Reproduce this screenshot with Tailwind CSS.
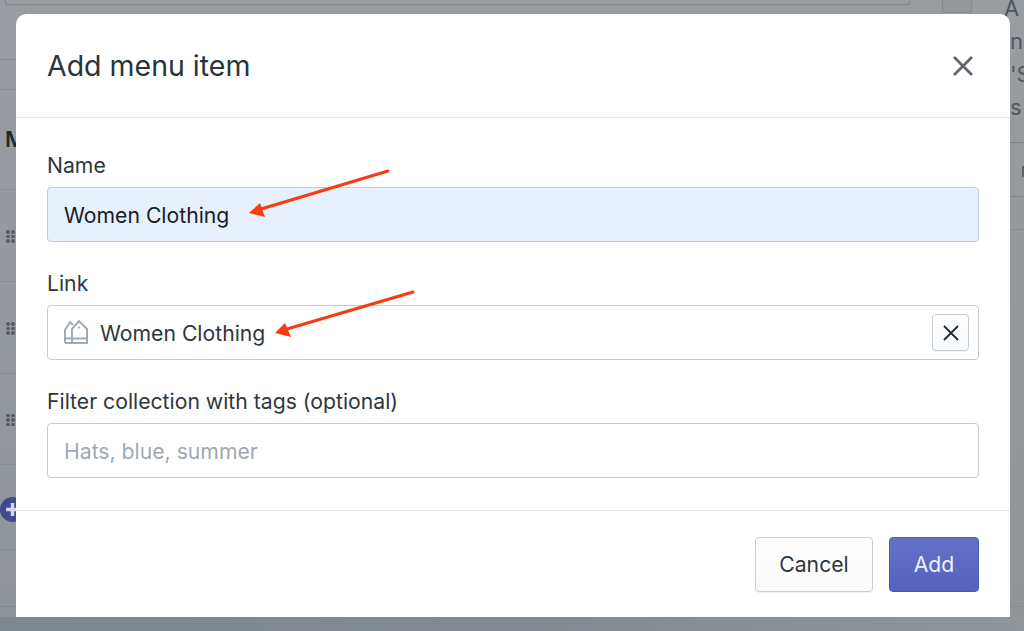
<!DOCTYPE html>
<html><head><meta charset="utf-8">
<script src="https://cdn.jsdelivr.net/npm/@tailwindcss/browser@4"></script>
</head>
<body class="relative h-[631px] w-[1024px] overflow-hidden bg-gradient-to-b from-[#999da2] to-[#8f9499] font-['Inter','Liberation_Sans',sans-serif]">
<!-- page behind the overlay -->
<div class="absolute inset-0 flex flex-col">
  <div class="flex h-[617px] shrink-0">
    <div class="w-[942px] flex flex-col shrink-0">
      <div class="h-[5px] ml-[5px] w-[905px] shrink-0 border-b border-x border-[#80868c] rounded-b-[3px] bg-[#9b9fa3]"></div>
      <div class="h-[55px] shrink-0 border-b border-[#868c92]"></div>
      <div class="h-[30px] shrink-0 border-b border-[#868c92]"></div>
      <div class="h-[100px] shrink-0 border-b border-[#868c92] text-[22px] font-semibold text-[#23272b] pt-[33px] pl-[5px] leading-[32px]">M</div>
      <div class="h-[92px] shrink-0 border-b border-[#868c92] flex items-center pl-[6px] pt-[2px]"><div class="grid grid-cols-2 gap-x-[1.500px] gap-y-[1px] w-[9px]"><i class="size-[3.500px] rounded-full bg-[#565c62]"></i><i class="size-[3.500px] rounded-full bg-[#565c62]"></i><i class="size-[3.500px] rounded-full bg-[#565c62]"></i><i class="size-[3.500px] rounded-full bg-[#565c62]"></i><i class="size-[3.500px] rounded-full bg-[#565c62]"></i><i class="size-[3.500px] rounded-full bg-[#565c62]"></i></div></div>
      <div class="h-[92px] shrink-0 border-b border-[#868c92] flex items-center pl-[6px] pt-[2px]"><div class="grid grid-cols-2 gap-x-[1.500px] gap-y-[1px] w-[9px]"><i class="size-[3.500px] rounded-full bg-[#565c62]"></i><i class="size-[3.500px] rounded-full bg-[#565c62]"></i><i class="size-[3.500px] rounded-full bg-[#565c62]"></i><i class="size-[3.500px] rounded-full bg-[#565c62]"></i><i class="size-[3.500px] rounded-full bg-[#565c62]"></i><i class="size-[3.500px] rounded-full bg-[#565c62]"></i></div></div>
      <div class="h-[91px] shrink-0 border-b border-[#868c92] flex items-center pl-[6px] pt-[2px]"><div class="grid grid-cols-2 gap-x-[1.500px] gap-y-[1px] w-[9px]"><i class="size-[3.500px] rounded-full bg-[#565c62]"></i><i class="size-[3.500px] rounded-full bg-[#565c62]"></i><i class="size-[3.500px] rounded-full bg-[#565c62]"></i><i class="size-[3.500px] rounded-full bg-[#565c62]"></i><i class="size-[3.500px] rounded-full bg-[#565c62]"></i><i class="size-[3.500px] rounded-full bg-[#565c62]"></i></div></div>
      <div class="h-[85px] shrink-0 border-b border-[#868c92] flex items-center">
        <svg class="size-[25px] mt-[4px]" viewBox="0 0 25 25"><circle cx="12.500" cy="12.500" r="12.500" fill="#3f4a8f"/><path d="M12.500 6v13M6 12.500h13" stroke="#d5d8e6" stroke-width="3.500"/></svg>
      </div>
      <div class="h-[57px] shrink-0 border-b border-[#80878d]"></div>
    </div>
    <div class="w-[30px] shrink-0">
      <div class="h-[13px] border-x border-b border-[#868c92] rounded-b-[3px] bg-[#94989d]"></div>
    </div>
    <div class="flex-1 flex flex-col overflow-hidden">
      <div class="h-[143px] shrink-0 border-b border-[#7d8389] text-[22px] leading-[33px] text-[#50575e] whitespace-nowrap">
        <div class="pl-[32px] -mt-[8px]">A</div>
        <div class="pl-[38px]">n</div>
        <div class="pl-[38px]">'S</div>
        <div class="pl-[38px] tracking-[1px]">si</div>
      </div>
      <div class="h-[54px] shrink-0 border-b border-[#7d8389] pt-[23px] pl-[50px]"><div class="h-[11px] w-[4px] bg-[#5d6368]"></div></div>
      <div class="h-[33px] shrink-0 border-b border-[#868c92]"></div>
      <div class="h-[377px] shrink-0 border-b border-[#868c92]"></div>
    </div>
  </div>
  <div class="flex-1 bg-gradient-to-r from-[#7e878e] via-[#838a91] to-[#90959a]"></div>
</div>
<!-- modal -->
<div class="absolute left-[16px] top-[14px] w-[994px] h-[603px] bg-white rounded-t-[10px] flex flex-col text-[#212b36]">
  <div class="h-[104px] shrink-0 border-b border-[#e4e6ea] pl-[31px] pr-[37px] flex items-center justify-between">
    <h1 class="text-[28.500px] leading-[36px] text-[#2b333b]">Add menu item</h1>
    <svg class="size-[20px]" viewBox="0 0 20 20" fill="none" stroke="#5f666d" stroke-width="2.800"><path d="M1 1 19 19M19 1 1 19"/></svg>
  </div>
  <div class="h-[393px] shrink-0 border-b border-[#e4e6ea] px-[31px] pt-[33px]">
    <label class="block text-[21.200px] leading-[28px] text-[#2f373e]">Name</label>
    <div class="mt-[8px] h-[55px] rounded-[4px] border border-[#c4cdd5] bg-[#e8effd] flex items-center pl-[16px] pt-[2px] text-[21.200px] text-[#16202a]">Women Clothing</div>
    <label class="block mt-[27px] text-[21.200px] leading-[28px] text-[#2f373e]">Link</label>
    <div class="mt-[8px] h-[55px] rounded-[4px] border border-[#c4cdd5] bg-white flex items-center pl-[16px] pr-[9px] text-[21.200px]">
      <svg class="size-[24px] mr-[12px] -mt-[2px]" viewBox="0 0 24 24" fill="none" stroke="#9fabb8" stroke-width="2"><path d="M1 23V10L6 2l3 3"/><path d="M8 23V9l7-8 8 8v14H1"/><path d="M1 18.500h22"/><circle cx="15" cy="7.500" r="1.100" fill="#9fabb8" stroke="none"/></svg>
      <span class="text-[#2f373e] pt-[2px]">Women Clothing</span>
      <div class="ml-auto size-[37px] rounded-[4px] border border-[#c4cdd5] flex items-center justify-center bg-gradient-to-b from-white to-[#f9fafb] shadow-[0_1px_0_rgba(22,29,37,0.05)]">
        <svg class="size-[16px]" viewBox="0 0 16 16" fill="none" stroke="#212b36" stroke-width="1.800"><path d="M1 1 15 15M15 1 1 15"/></svg>
      </div>
    </div>
    <label class="block mt-[27px] text-[21.200px] leading-[28px] text-[#2f373e]">Filter collection with tags (optional)</label>
    <div class="mt-[8px] h-[55px] rounded-[4px] border border-[#c4cdd5] bg-white flex items-center pl-[16px] pt-[2px] text-[21.200px] text-[#a0a9b2]">Hats, blue, summer</div>
  </div>
  <div class="flex-1 px-[31px] pt-[26px] flex justify-end gap-[16px]">
    <button class="h-[55px] w-[118px] rounded-[4px] border border-[#c9cfd6] bg-gradient-to-b from-white to-[#f9fafb] text-[21.200px] text-[#2f373e] shadow-[0_1px_0_rgba(22,29,37,0.05)]">Cancel</button>
    <button class="h-[55px] w-[90px] rounded-[4px] border border-[#4a58b5] bg-gradient-to-b from-[#6371c7] to-[#5563c1] text-[21.200px] text-[#eef0fa]">Add</button>
  </div>
</div>
<!-- annotation arrows -->
<svg class="absolute left-0 top-0 pointer-events-none" width="1024" height="631" viewBox="0 0 1024 631" fill="#fa3a12" stroke="none">
  <path d="M388 171 261 209" stroke="#fa3a12" stroke-width="3" stroke-linecap="round"/><path d="M249 213 260 203 265 217Z"/>
  <path d="M413 292 287 329" stroke="#fa3a12" stroke-width="3" stroke-linecap="round"/><path d="M275 333 285 323 291 337Z"/>
</svg>
</body></html>
